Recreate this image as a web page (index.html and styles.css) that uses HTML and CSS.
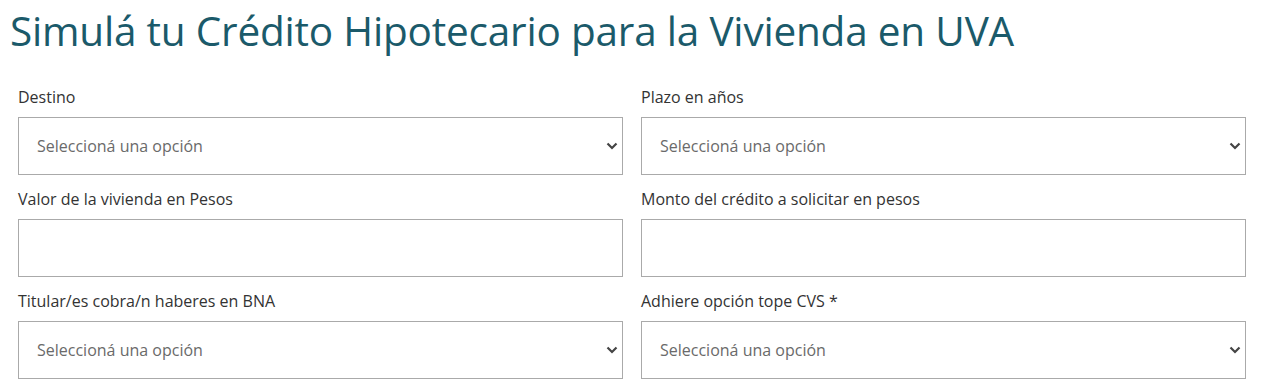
FILE: index.html
```html
<!DOCTYPE html>
<html>
<head>
<meta charset="utf-8">
<meta name="viewport" content="width=device-width, initial-scale=1.0">
<link rel="stylesheet" href="styles.css">
</head>
<body>
<h1 class="title">Simulá tu Crédito Hipotecario para la Vivienda en UVA</h1>
<form class="simulador">
  <div class="campo">
    <label>Destino</label>
    <div class="caja select"><span class="placeholder">Seleccioná una opción</span><svg class="chevron" viewBox="0 0 12 8"><path d="M1.5 1.5 L6 6 L10.5 1.5"/></svg></div>
  </div>
  <div class="campo">
    <label>Plazo en años</label>
    <div class="caja select"><span class="placeholder">Seleccioná una opción</span><svg class="chevron" viewBox="0 0 12 8"><path d="M1.5 1.5 L6 6 L10.5 1.5"/></svg></div>
  </div>
  <div class="campo">
    <label>Valor de la vivienda en Pesos</label>
    <div class="caja"></div>
  </div>
  <div class="campo">
    <label>Monto del crédito a solicitar en pesos</label>
    <div class="caja"></div>
  </div>
  <div class="campo">
    <label>Titular/es cobra/n haberes en BNA</label>
    <div class="caja select"><span class="placeholder">Seleccioná una opción</span><svg class="chevron" viewBox="0 0 12 8"><path d="M1.5 1.5 L6 6 L10.5 1.5"/></svg></div>
  </div>
  <div class="campo">
    <label>Adhiere opción tope CVS *</label>
    <div class="caja select"><span class="placeholder">Seleccioná una opción</span><svg class="chevron" viewBox="0 0 12 8"><path d="M1.5 1.5 L6 6 L10.5 1.5"/></svg></div>
  </div>
</form>
</body>
</html>
```
FILE: styles.css
```css
body {
  margin: 0;
  background-color: #fff;
  font-family: "Open Sans", "Noto Sans", sans-serif;
}
.title {
  margin: 0;
  padding: 6px 0 0 10px;
  height: 80px;
  box-sizing: border-box;
  font-size: 40.5px;
  font-weight: 400;
  line-height: 50px;
  color: #1b5a6a;
  letter-spacing: -0.2px;
}
.simulador {
  display: grid;
  grid-template-columns: 605px 605px;
  column-gap: 18px;
  row-gap: 7px;
  padding: 0 0 0 18px;
}
.campo label {
  display: block;
  font-size: 16px;
  line-height: 22px;
  color: #333;
  margin-top: 6px;
  margin-bottom: 9px;
}
.caja {
  height: 58px;
  box-sizing: border-box;
  border: 1px solid #aaa;
  background: #fff;
  display: flex;
  align-items: center;
  justify-content: space-between;
  padding: 0 4px 0 18px;
}
.placeholder {
  font-size: 16px;
  color: #6a6a6a;
}
.chevron {
  width: 12px;
  height: 8px;
  fill: none;
  stroke: #444;
  stroke-width: 2.2;
}
```
